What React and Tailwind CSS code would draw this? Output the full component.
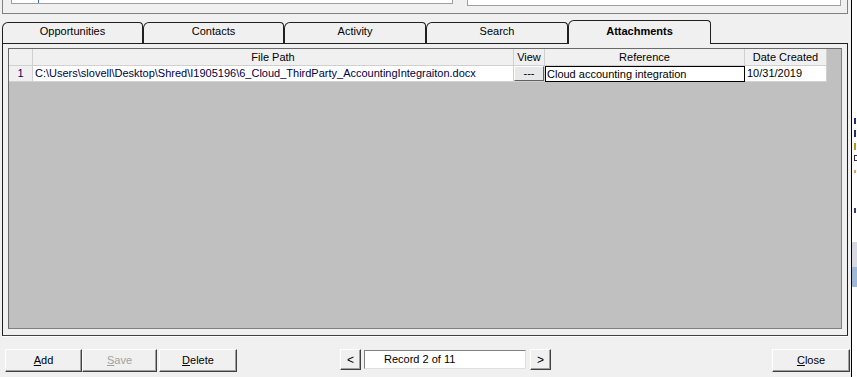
import React from 'react';

const font = { fontFamily: '"Liberation Sans", Arial, sans-serif' };

function Tab({ label, active, width }) {
  if (active) {
    return (
      <div
        className="relative z-10 -mb-px flex h-[24px] items-center justify-center rounded-tl-[6px] rounded-tr-[4px] border border-b-0 border-[#202020] bg-[#f0f0f0] pb-[3px] text-[11px] font-bold text-black"
        style={{ width }}
      >
        {label}
      </div>
    );
  }
  return (
    <div
      className="flex h-[21px] items-center justify-center rounded-tl-[6px] rounded-tr-[4px] border border-b-0 border-[#202020] bg-[#f0f0f0] pb-[4px] text-[11px] text-black"
      style={{ width }}
    >
      {label}
    </div>
  );
}

function Btn({ children, className = '', disabled }) {
  return (
    <div
      className={`flex items-center justify-center border border-t-white border-l-white border-r-[#404040] border-b-[#404040] bg-[#f0f0f0] shadow-[inset_-1px_-1px_0_#a0a0a0] text-[11px] ${disabled ? 'text-[#a0a0a0]' : 'text-black'} ${className}`}
    >
      {children}
    </div>
  );
}

export default function App() {
  return (
    <div className="flex h-[377px] w-[857px] overflow-hidden bg-[#f0f0f0]" style={font}>
      <div className="flex w-[851px] flex-col">
        {/* top strip left over from the panel above */}
        <div className="ml-[2px] mr-[3px] flex h-[14px] gap-[14px] border-b border-l border-r border-b-[#808080] border-l-[#808080] border-r-[#808080] pl-[8px] pr-[6px]">
          <div className="relative h-[4px] w-[442px] border-b border-l border-r border-[#a0a0a0] bg-white">
            <div className="absolute left-[26px] top-0 h-[3px] w-px bg-[#3070d0]" />
          </div>
          <div className="h-[6px] flex-1 border-b border-l border-r border-[#a0a0a0] bg-white" />
        </div>

        {/* tabs */}
        <div className="mt-[6px] flex items-end pl-[2px]">
          <Tab label="Opportunities" width={141} />
          <Tab label="Contacts" width={141} />
          <Tab label="Activity" width={142} />
          <Tab label="Search" width={142} />
          <Tab label="Attachments" active width={143} />
        </div>

        {/* tab panel */}
        <div className="ml-[2px] mr-[3px] flex h-[293px] flex-col border border-[#202020] border-b-[#404040] px-[5px] pt-[4px] pb-[6px] shadow-[0_1px_0_#ffffff]">
          <div className="flex-1 border border-t-[#696969] border-l-[#696969] border-r-[#808080] border-b-[#808080] bg-[#c0c0c0]">
            {/* header */}
            <div className="flex h-[17px] text-[11px] text-black">
              <div className="w-[24px] border-b border-r border-[#d0d0d0] bg-[#f0f0f0]" />
              <div className="flex w-[481px] items-center justify-center border-b border-r border-[#d0d0d0] bg-[#f0f0f0]">File Path</div>
              <div className="flex w-[31px] items-center justify-center border-b border-r border-[#d0d0d0] bg-[#f0f0f0]">View</div>
              <div className="flex w-[200px] items-center justify-center border-b border-r border-[#d0d0d0] bg-[#f0f0f0]">Reference</div>
              <div className="flex w-[82px] items-center justify-center border-b border-r border-[#d0d0d0] bg-[#f0f0f0]">Date Created</div>
            </div>
            {/* row */}
            <div className="flex h-[16px] text-[11px] text-black">
              <div className="flex w-[24px] items-center justify-center border-b border-r border-[#d0d0d0] bg-[#f0f0f0] text-[#000060]">1</div>
              <div className="flex w-[481px] items-center whitespace-nowrap border-b border-r border-[#d0d0d0] bg-white pl-[2px] text-[#000040]">
                C:\Users\slovell\Desktop\Shred\I1905196\6_Cloud_ThirdParty_AccountingIntegraiton.docx
              </div>
              <div className="w-[31px] border-b border-r border-[#d0d0d0] bg-white">
                <div className="flex h-full items-center justify-center border border-t-white border-l-white border-r-[#606060] border-b-[#606060] bg-[#e8e8e8] leading-none">---</div>
              </div>
              <div className="flex w-[200px] items-center border border-black bg-white pl-[1px]">Cloud accounting integration</div>
              <div className="flex w-[82px] items-center border-b border-r border-[#d0d0d0] bg-white pl-[2px]">10/31/2019</div>
            </div>
          </div>
        </div>

        {/* bottom buttons */}
        <div className="mt-[13px] flex items-start">
          <div className="ml-[5px] flex">
            <Btn className="h-[23px] w-[77px]"><span><u>A</u>dd</span></Btn>
            <Btn className="h-[23px] w-[75px]" disabled><span><u>S</u>ave</span></Btn>
            <Btn className="ml-[2px] h-[23px] w-[78px]"><span><u>D</u>elete</span></Btn>
          </div>
          <div className="ml-[103px] flex items-center gap-[3px]">
            <Btn className="h-[21px] w-[21px] text-[12px]">&lt;</Btn>
            <div className="flex h-[19px] w-[162px] items-center border border-t-[#808080] border-l-[#808080] border-r-[#e0e0e0] border-b-[#e0e0e0] bg-white pl-[19px] text-[11px]">
              Record 2 of 11
            </div>
            <Btn className="ml-[1px] h-[21px] w-[21px] text-[12px]">&gt;</Btn>
          </div>
          <Btn className="ml-auto mr-px h-[23px] w-[78px]"><span><u>C</u>lose</span></Btn>
        </div>
      </div>

      {/* edge of the window behind */}
      <div className="relative flex-1 border-l border-black bg-white">
        <div className="absolute left-[2px] top-[118px] h-[6px] w-[2px] bg-[#203080]" />
        <div className="absolute left-[2px] top-[130px] h-[7px] w-[3px] border-l-2 border-[#203080]" />
        <div className="absolute left-[2px] top-[143px] h-[7px] w-[2px] bg-[#c09030]" />
        <div className="absolute left-[2px] top-[155px] h-[6px] w-[3px] border-l border-t border-b border-[#303030]" />
        <div className="absolute left-[2px] top-[170px] h-[3px] w-[2px] bg-[#f0a040]" />
        <div className="absolute left-[2px] top-[208px] h-[5px] w-[2px] bg-[#304080]" />
        <div className="absolute left-0 top-[242px] h-[25px] w-full bg-[#d8d8e0]" />
        <div className="absolute left-0 top-[267px] h-[20px] w-full bg-[#a0b8d8]" />
      </div>
    </div>
  );
}
